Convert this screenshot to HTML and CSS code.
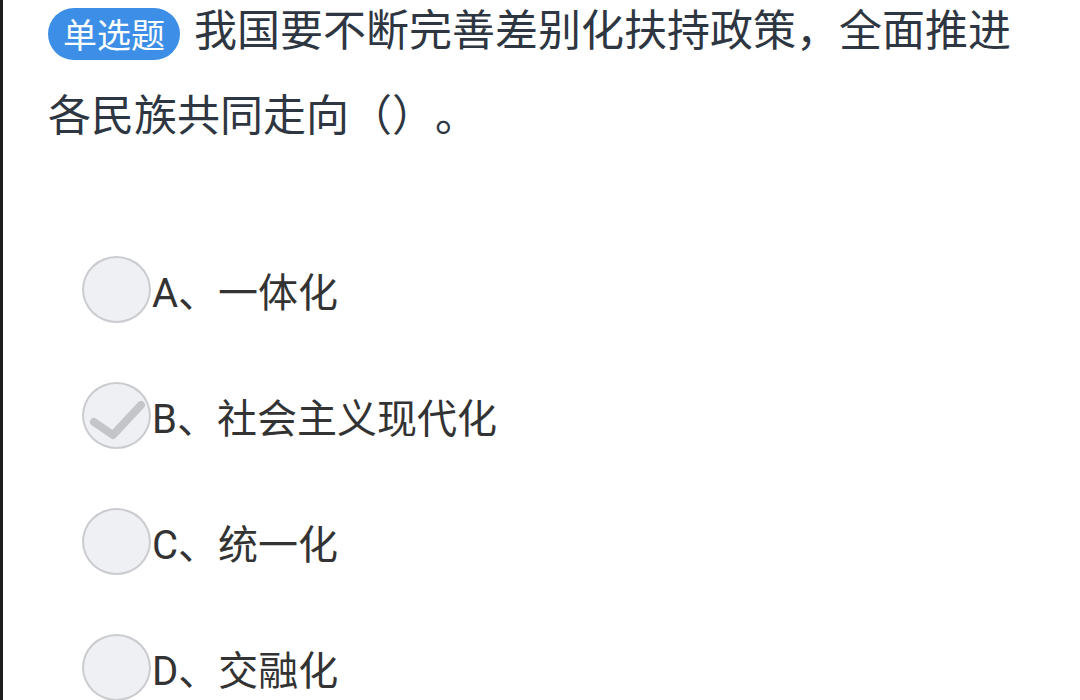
FILE: index.html
```html
<!DOCTYPE html>
<html lang="zh-CN">
<head>
<meta charset="utf-8">
<link rel="stylesheet" href="styles.css">
</head>
<body>
<div class="page">
  <div class="question">
    <span class="badge">单选题</span>我国要不断完善差别化扶持政策，全面推进各民族共同走向（）。
  </div>
  <div class="options">
    <div class="option">
      <span class="radio"></span><span class="label">A、一体化</span>
    </div>
    <div class="option">
      <span class="radio">
        <svg class="check" viewBox="0 0 67 67" width="67" height="67"><polyline points="12,40 31,53 59,23" fill="none" stroke="#c4c5c8" stroke-width="8" stroke-linecap="round" stroke-linejoin="round"/></svg>
      </span><span class="label">B、社会主义现代化</span>
    </div>
    <div class="option">
      <span class="radio"></span><span class="label">C、统一化</span>
    </div>
    <div class="option">
      <span class="radio"></span><span class="label">D、交融化</span>
    </div>
  </div>
</div>
</body>
</html>
```

FILE: styles.css
```css
html, body {
  margin: 0;
  padding: 0;
  background: #ffffff;
}
.page {
  width: 1077px;
  height: 700px;
  overflow: hidden;
  border-left: 3px solid #1c1c1c;
  font-family: "Noto Sans CJK SC", "Noto Sans", sans-serif;
  text-spacing-trim: space-all;
}
.question {
  margin-top: -15px;
  padding-left: 45px;
  padding-right: 40px;
  font-size: 43px;
  line-height: 85px;
  color: #2e3642;
}
.badge {
  display: inline-block;
  vertical-align: middle;
  height: 52px;
  line-height: 52px;
  padding: 0 15px;
  margin: 0 14px 0 0;
  border-radius: 26px;
  background: #3d8ee6;
  color: #ffffff;
  font-size: 34px;
}
.options {
  display: flex;
  flex-direction: column;
  gap: 59px;
  padding-left: 79px;
  margin-top: 101px;
}
.option {
  display: flex;
  align-items: center;
  height: 67px;
}
.radio {
  display: block;
  box-sizing: border-box;
  width: 69px;
  height: 67px;
  border-radius: 50%;
  border: 2px solid #cbcccf;
  background: #eef0f3;
  position: relative;
  flex: none;
}
.check {
  position: absolute;
  left: -2px;
  top: -2px;
}
.label {
  margin-left: 1px;
  font-family: Roboto, "Noto Sans CJK SC", sans-serif;
  font-size: 40px;
  color: #333333;
}
```
